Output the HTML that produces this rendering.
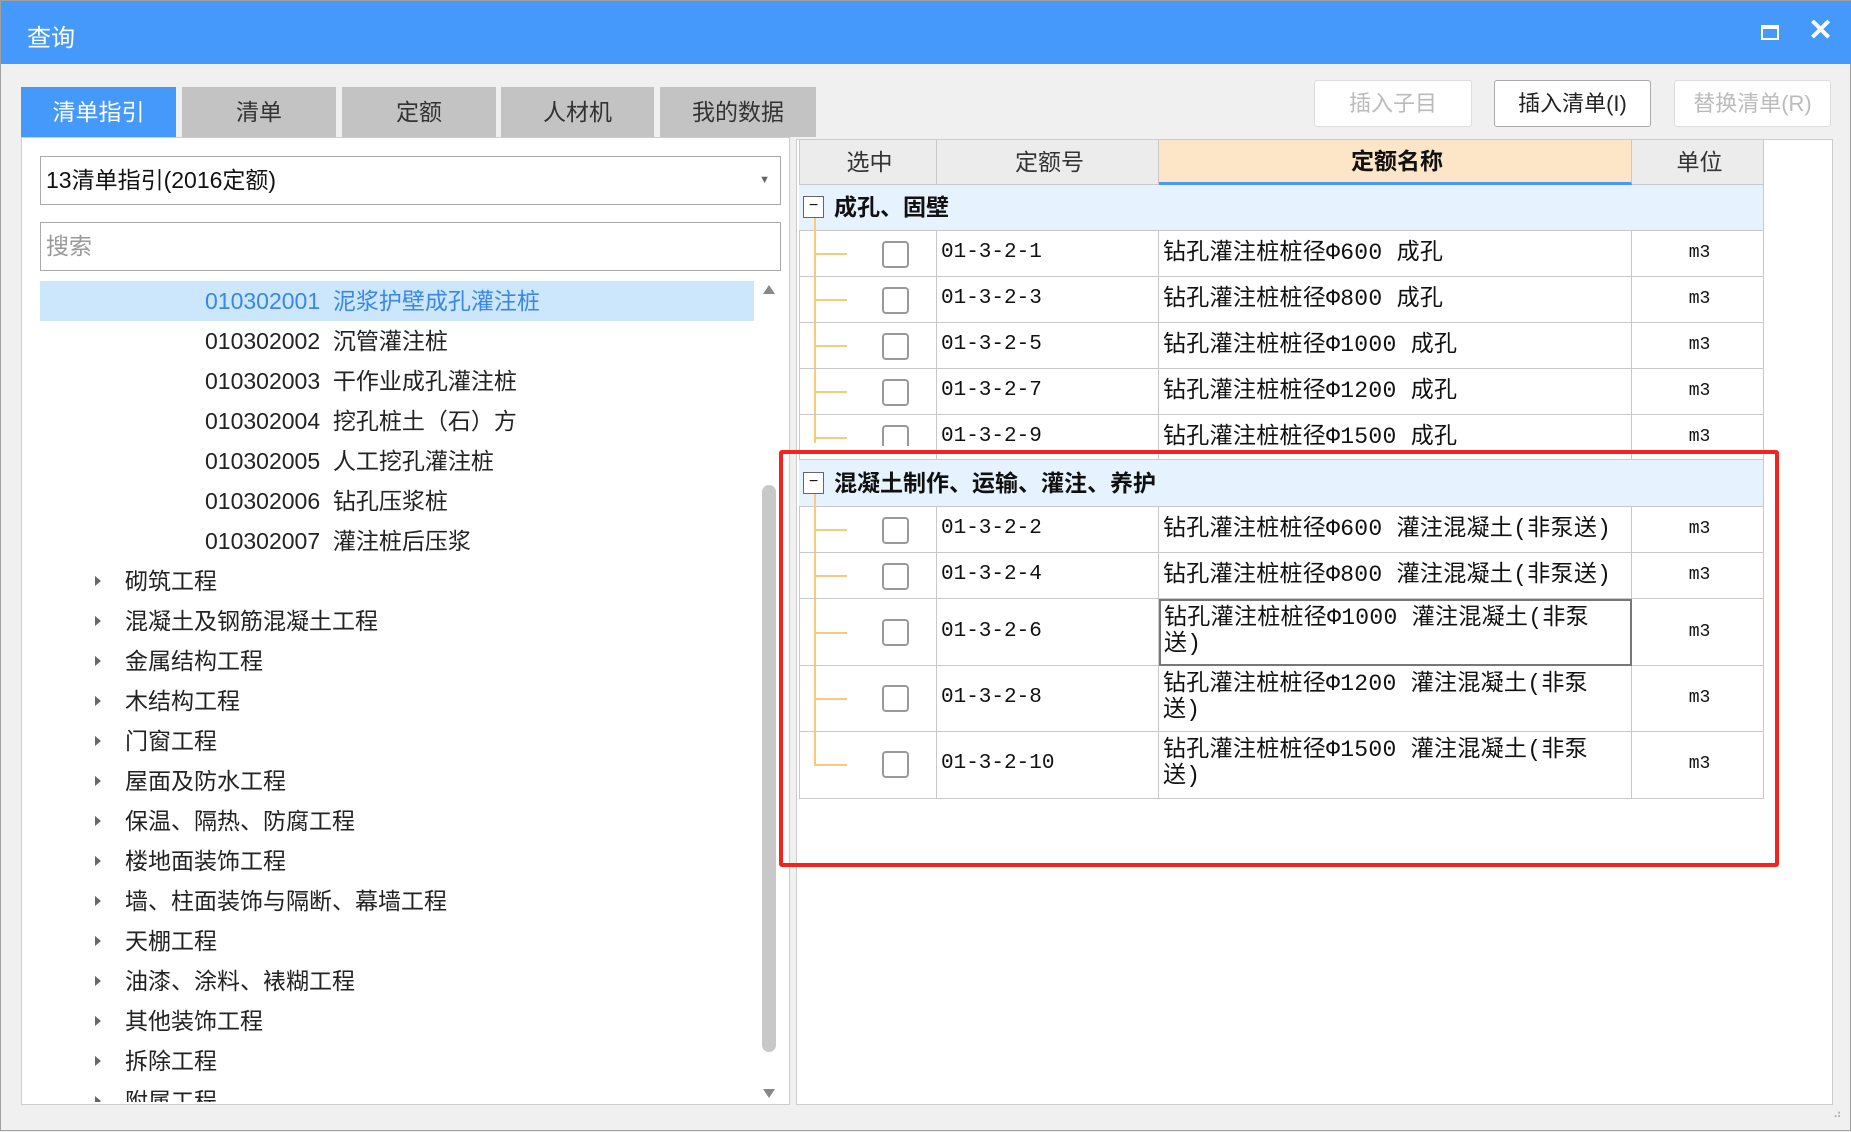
<!DOCTYPE html>
<html><head><meta charset="utf-8"><style>
*{margin:0;padding:0;box-sizing:border-box}
body{width:1851px;height:1131px;overflow:hidden;background:#f0f0f0;font-family:"Liberation Sans","Noto Sans CJK SC",sans-serif;position:relative;border:1px solid #a0a0a0}
.a{position:absolute}
.title{left:0;top:0;width:1851px;height:63px;background:#4499fb;color:#fff;font-size:24px}
.tab{top:86px;height:50px;background:#c3c3c3;color:#333;font-size:23px;text-align:center;line-height:50px}
.btn{top:79px;height:47px;background:#fff;border:1px solid #ddd;border-radius:3px;font-size:22px;text-align:center;line-height:45px;color:#bbb}
.li{left:0;width:714px;height:40px;line-height:40px;font-size:23px;color:#222;white-space:nowrap}
.arr{position:absolute;left:55px;top:15px;width:0;height:0;border-left:6px solid #666;border-top:5px solid transparent;border-bottom:5px solid transparent}
.tb{font-family:"Liberation Mono","Noto Sans CJK SC",monospace;font-size:21px;color:#111}
.cell{position:absolute;border-right:1px solid #c8c8c8;border-bottom:1px solid #c8c8c8;padding-left:4px;overflow:hidden;white-space:nowrap}
.nm{font-size:23px;letter-spacing:0.3px}
.cb{position:absolute;width:27px;height:27px;border:2px solid #999;border-radius:4px;background:#fff}
.tl{position:absolute;height:2px;background:#fcc978}
</style></head><body>
<div class="a title"><span class="a" style="left:26px;top:17px">查询</span>
<div class="a" style="left:1760px;top:24px;width:18px;height:15px;border:2px solid #fff;border-top-width:4px"></div>
<span class="a" style="left:1807px;top:12px;font-size:30px;font-weight:bold">✕</span></div>

<div class="a tab" style="left:20px;width:155px;background:#4499fb;color:#fff">清单指引</div>
<div class="a tab" style="left:181px;width:154px">清单</div>
<div class="a tab" style="left:341px;width:154px">定额</div>
<div class="a tab" style="left:500px;width:153px">人材机</div>
<div class="a tab" style="left:659px;width:156px">我的数据</div>

<div class="a btn" style="left:1313px;width:158px">插入子目</div>
<div class="a btn" style="left:1493px;width:157px;color:#222;border-color:#aaa">插入清单(I)</div>
<div class="a btn" style="left:1673px;width:157px">替换清单(R)</div>

<!-- left panel -->
<div class="a" style="left:20px;top:136px;width:769px;height:968px;background:#fff;border:1px solid #ccc"></div>
<div class="a" style="left:39px;top:155px;width:741px;height:49px;border:1px solid #aaa;background:#fff;font-size:23px;line-height:47px;padding-left:5px;color:#111">13清单指引(2016定额)<span class="a" style="right:10px;top:0;font-size:11px;color:#666">▼</span></div>
<div class="a" style="left:39px;top:221px;width:741px;height:49px;border:1px solid #aaa;background:#fff;font-size:23px;line-height:47px;padding-left:5px;color:#999">搜索</div>
<div class="a" style="left:39px;top:280px;width:741px;height:821px;overflow:hidden">
<div style="position:relative">
<div class="li a" style="top:0;background:#cce6fc;color:#3a87e6"><span style="padding-left:165px">010302001&nbsp; 泥浆护壁成孔灌注桩</span></div>
<div class="li a" style="top:40px"><span style="padding-left:165px">010302002&nbsp; 沉管灌注桩</span></div>
<div class="li a" style="top:80px"><span style="padding-left:165px">010302003&nbsp; 干作业成孔灌注桩</span></div>
<div class="li a" style="top:120px"><span style="padding-left:165px">010302004&nbsp; 挖孔桩土（石）方</span></div>
<div class="li a" style="top:160px"><span style="padding-left:165px">010302005&nbsp; 人工挖孔灌注桩</span></div>
<div class="li a" style="top:200px"><span style="padding-left:165px">010302006&nbsp; 钻孔压浆桩</span></div>
<div class="li a" style="top:240px"><span style="padding-left:165px">010302007&nbsp; 灌注桩后压浆</span></div>
<div class="li a" style="top:280px"><i class="arr"></i><span style="padding-left:85px">砌筑工程</span></div>
<div class="li a" style="top:320px"><i class="arr"></i><span style="padding-left:85px">混凝土及钢筋混凝土工程</span></div>
<div class="li a" style="top:360px"><i class="arr"></i><span style="padding-left:85px">金属结构工程</span></div>
<div class="li a" style="top:400px"><i class="arr"></i><span style="padding-left:85px">木结构工程</span></div>
<div class="li a" style="top:440px"><i class="arr"></i><span style="padding-left:85px">门窗工程</span></div>
<div class="li a" style="top:480px"><i class="arr"></i><span style="padding-left:85px">屋面及防水工程</span></div>
<div class="li a" style="top:520px"><i class="arr"></i><span style="padding-left:85px">保温、隔热、防腐工程</span></div>
<div class="li a" style="top:560px"><i class="arr"></i><span style="padding-left:85px">楼地面装饰工程</span></div>
<div class="li a" style="top:600px"><i class="arr"></i><span style="padding-left:85px">墙、柱面装饰与隔断、幕墙工程</span></div>
<div class="li a" style="top:640px"><i class="arr"></i><span style="padding-left:85px">天棚工程</span></div>
<div class="li a" style="top:680px"><i class="arr"></i><span style="padding-left:85px">油漆、涂料、裱糊工程</span></div>
<div class="li a" style="top:720px"><i class="arr"></i><span style="padding-left:85px">其他装饰工程</span></div>
<div class="li a" style="top:760px"><i class="arr"></i><span style="padding-left:85px">拆除工程</span></div>
<div class="li a" style="top:800px"><i class="arr"></i><span style="padding-left:85px">附属工程</span></div>
</div>
<div class="a" style="left:718px;top:0;width:23px;height:821px;background:#fff"></div>
<div class="a" style="left:722px;top:204px;width:14px;height:567px;background:#c8c8c8;border-radius:7px"></div>
<div class="a" style="left:723px;top:4px;border-bottom:9px solid #888;border-left:6px solid transparent;border-right:6px solid transparent"></div>
<div class="a" style="left:723px;top:808px;border-top:9px solid #888;border-left:6px solid transparent;border-right:6px solid transparent"></div>
</div>

<!-- right panel -->
<div class="a" style="left:795px;top:138px;width:1037px;height:966px;background:#fff;border:1px solid #ccc"></div>
<div class="a tb" style="left:798px;top:139px;width:965px">
<div class="cell" style="left:0;top:0;width:138px;height:45px;background:#ececec;text-align:center;line-height:44px;font-family:'Liberation Sans','Noto Sans CJK SC';font-size:23px;color:#333">选中</div>
<div class="cell" style="left:138px;top:0;width:222px;height:45px;background:#ececec;text-align:center;line-height:44px;font-family:'Liberation Sans','Noto Sans CJK SC';font-size:23px;color:#333">定额号</div>
<div class="cell" style="left:360px;top:0;width:473px;height:45px;background:#fde5c8;text-align:center;line-height:42px;font-family:'Liberation Sans','Noto Sans CJK SC';font-size:23px;font-weight:bold;border-bottom:3px solid #4499fb">定额名称</div>
<div class="cell" style="left:833px;top:0;width:132px;height:45px;background:#ececec;text-align:center;line-height:44px;font-family:'Liberation Sans','Noto Sans CJK SC';font-size:23px;color:#333">单位</div>
</div>
<div class="a" style="left:798px;top:139px;width:1px;height:659px;background:#c8c8c8"></div>

<div class="a tb" style="left:798px;top:0;width:965px;height:1131px">
<div class="cell" style="left:0;top:184px;width:965px;height:46px;background:#e6f3fe;font-weight:bold;font-size:23px;line-height:44px;padding-left:35px;font-family:'Liberation Sans','Noto Sans CJK SC'">成孔、固壁</div>
<div class="a" style="left:4px;top:195px;width:21px;height:22px;border:1px solid #666;background:#fff;font-size:16px;line-height:18px;text-align:center">−</div>
<div class="a" style="left:15px;top:217px;width:2px;height:225px;background:#fcc978"></div>
<div class="cell" style="left:0;top:459px;width:965px;height:47px;background:#e6f3fe;font-weight:bold;font-size:23px;line-height:46px;padding-left:35px;font-family:'Liberation Sans','Noto Sans CJK SC'">混凝土制作、运输、灌注、养护</div>
<div class="a" style="left:4px;top:471px;width:21px;height:22px;border:1px solid #666;background:#fff;font-size:16px;line-height:18px;text-align:center">−</div>
<div class="a" style="left:15px;top:493px;width:2px;height:272px;background:#fcc978"></div>
</div>

<div class="a tb" style="left:798px;top:0;width:965px;height:1131px">
<div class="cell" style="left:0;top:230px;width:138px;height:46px"></div><div class="tl" style="left:15px;top:252px;width:33px"></div><div class="cb" style="left:83px;top:240px"></div>
<div class="cell" style="left:138px;top:230px;width:222px;height:46px;line-height:44px">01-3-2-1</div>
<div class="cell nm" style="left:360px;top:230px;width:473px;height:46px;line-height:44px">钻孔灌注桩桩径Φ600 成孔</div>
<div class="cell" style="left:833px;top:230px;width:132px;height:46px;line-height:44px;text-align:center;font-size:18px">m3</div>

<div class="cell" style="left:0;top:276px;width:138px;height:46px"></div><div class="tl" style="left:15px;top:298px;width:33px"></div><div class="cb" style="left:83px;top:286px"></div>
<div class="cell" style="left:138px;top:276px;width:222px;height:46px;line-height:44px">01-3-2-3</div>
<div class="cell nm" style="left:360px;top:276px;width:473px;height:46px;line-height:44px">钻孔灌注桩桩径Φ800 成孔</div>
<div class="cell" style="left:833px;top:276px;width:132px;height:46px;line-height:44px;text-align:center;font-size:18px">m3</div>

<div class="cell" style="left:0;top:322px;width:138px;height:46px"></div><div class="tl" style="left:15px;top:344px;width:33px"></div><div class="cb" style="left:83px;top:332px"></div>
<div class="cell" style="left:138px;top:322px;width:222px;height:46px;line-height:44px">01-3-2-5</div>
<div class="cell nm" style="left:360px;top:322px;width:473px;height:46px;line-height:44px">钻孔灌注桩桩径Φ1000 成孔</div>
<div class="cell" style="left:833px;top:322px;width:132px;height:46px;line-height:44px;text-align:center;font-size:18px">m3</div>

<div class="cell" style="left:0;top:368px;width:138px;height:46px"></div><div class="tl" style="left:15px;top:390px;width:33px"></div><div class="cb" style="left:83px;top:378px"></div>
<div class="cell" style="left:138px;top:368px;width:222px;height:46px;line-height:44px">01-3-2-7</div>
<div class="cell nm" style="left:360px;top:368px;width:473px;height:46px;line-height:44px">钻孔灌注桩桩径Φ1200 成孔</div>
<div class="cell" style="left:833px;top:368px;width:132px;height:46px;line-height:44px;text-align:center;font-size:18px">m3</div>

<div class="cell" style="left:0;top:414px;width:138px;height:45px"></div><div class="tl" style="left:15px;top:436px;width:33px"></div><div class="cb" style="left:83px;top:424px;height:21px;border-bottom:none;border-radius:4px 4px 0 0"></div>
<div class="cell" style="left:138px;top:414px;width:222px;height:45px;line-height:44px">01-3-2-9</div>
<div class="cell nm" style="left:360px;top:414px;width:473px;height:45px;line-height:44px">钻孔灌注桩桩径Φ1500 成孔</div>
<div class="cell" style="left:833px;top:414px;width:132px;height:45px;line-height:44px;text-align:center;font-size:18px">m3</div>

<div class="cell" style="left:0;top:506px;width:138px;height:46px"></div><div class="tl" style="left:15px;top:528px;width:33px"></div><div class="cb" style="left:83px;top:516px"></div>
<div class="cell" style="left:138px;top:506px;width:222px;height:46px;line-height:44px">01-3-2-2</div>
<div class="cell nm" style="left:360px;top:506px;width:473px;height:46px;line-height:44px">钻孔灌注桩桩径Φ600 灌注混凝土(非泵送)</div>
<div class="cell" style="left:833px;top:506px;width:132px;height:46px;line-height:44px;text-align:center;font-size:18px">m3</div>

<div class="cell" style="left:0;top:552px;width:138px;height:46px"></div><div class="tl" style="left:15px;top:574px;width:33px"></div><div class="cb" style="left:83px;top:562px"></div>
<div class="cell" style="left:138px;top:552px;width:222px;height:46px;line-height:44px">01-3-2-4</div>
<div class="cell nm" style="left:360px;top:552px;width:473px;height:46px;line-height:44px">钻孔灌注桩桩径Φ800 灌注混凝土(非泵送)</div>
<div class="cell" style="left:833px;top:552px;width:132px;height:46px;line-height:44px;text-align:center;font-size:18px">m3</div>

<div class="cell" style="left:0;top:598px;width:138px;height:67px"></div><div class="tl" style="left:15px;top:631px;width:33px"></div><div class="cb" style="left:83px;top:618px"></div>
<div class="cell" style="left:138px;top:598px;width:222px;height:67px;line-height:66px">01-3-2-6</div>
<div class="cell nm" style="left:360px;top:598px;width:473px;height:67px;line-height:26px;padding:4px 0 0 3px;border:2px solid #777">钻孔灌注桩桩径Φ1000 灌注混凝土(非泵<br>送)</div>
<div class="cell" style="left:833px;top:598px;width:132px;height:67px;line-height:66px;text-align:center;font-size:18px">m3</div>

<div class="cell" style="left:0;top:665px;width:138px;height:66px"></div><div class="tl" style="left:15px;top:697px;width:33px"></div><div class="cb" style="left:83px;top:684px"></div>
<div class="cell" style="left:138px;top:665px;width:222px;height:66px;line-height:64px">01-3-2-8</div>
<div class="cell nm" style="left:360px;top:665px;width:473px;height:66px;line-height:26px;padding:5px 0 0 4px">钻孔灌注桩桩径Φ1200 灌注混凝土(非泵<br>送)</div>
<div class="cell" style="left:833px;top:665px;width:132px;height:66px;line-height:64px;text-align:center;font-size:18px">m3</div>

<div class="cell" style="left:0;top:731px;width:138px;height:67px"></div><div class="tl" style="left:15px;top:763px;width:33px"></div><div class="cb" style="left:83px;top:750px"></div>
<div class="cell" style="left:138px;top:731px;width:222px;height:67px;line-height:64px">01-3-2-10</div>
<div class="cell nm" style="left:360px;top:731px;width:473px;height:67px;line-height:26px;padding:5px 0 0 4px">钻孔灌注桩桩径Φ1500 灌注混凝土(非泵<br>送)</div>
<div class="cell" style="left:833px;top:731px;width:132px;height:67px;line-height:64px;text-align:center;font-size:18px">m3</div>
</div>

<div class="a" style="left:778px;top:449px;width:1000px;height:417px;border:4px solid #f5231c;border-radius:3px"></div>

<div class="a" style="left:1832px;top:1106px;font-size:12px;color:#aaa;letter-spacing:-2px">⠴</div>
</body></html>
